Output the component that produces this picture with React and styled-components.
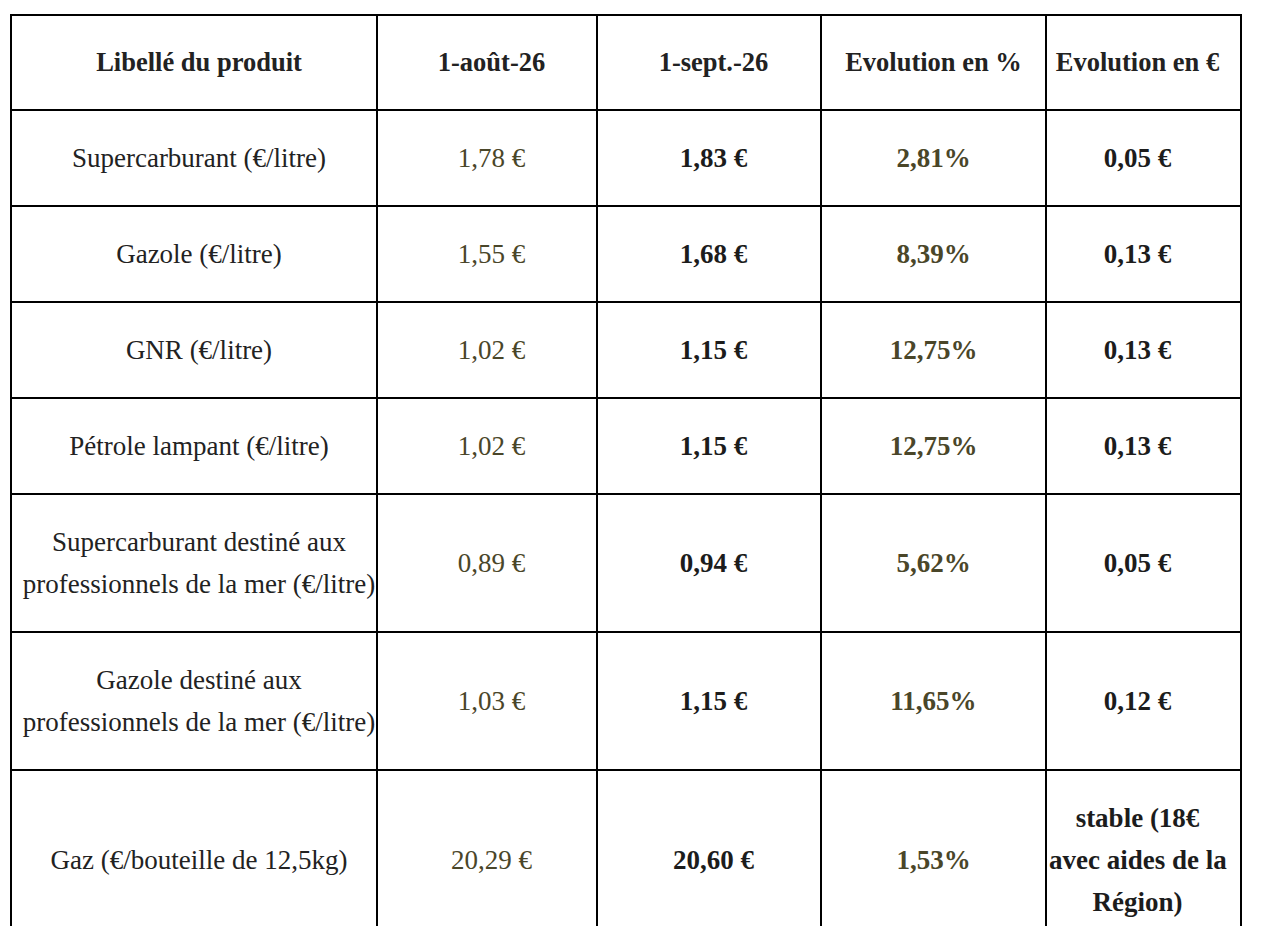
import React from "react";
import styled, { createGlobalStyle } from "styled-components";

const GlobalStyle = createGlobalStyle`
  html, body {
    margin: 0;
    padding: 0;
    background: #ffffff;
  }
  body {
    font-family: "Liberation Serif", "Times New Roman", serif;
    color: #222222;
  }
`;

const Page = styled.div`
  padding: 14px 0 0 10px;
`;

const Table = styled.table`
  border-collapse: collapse;
  table-layout: fixed;
  width: 1231px;
`;

const Col = styled.col`
  width: ${(p) => p.$w}px;
`;

// horizontal padding per column: [left, right]
const pads = [
  [10, 0],
  [10, 1],
  [10, 1],
  [6, 6],
  [2, 14],
];

const Cell = styled.td`
  border: 2px solid #000000;
  padding: 26px ${(p) => pads[p.$col][1]}px 26px ${(p) => pads[p.$col][0]}px;
  text-align: center;
  vertical-align: middle;
  font-size: 27px;
  line-height: 42px;
  white-space: nowrap;
  font-weight: ${(p) => (p.$bold ? 700 : 400)};
  color: ${(p) => (p.$olive ? "#4a4629" : p.$bold ? "#1c1c1c" : "#222222")};
`;

const HeadCell = styled.th`
  border: 2px solid #000000;
  padding: 26px ${(p) => pads[p.$col][1]}px 26px ${(p) => pads[p.$col][0]}px;
  text-align: center;
  vertical-align: middle;
  font-size: 26.5px;
  line-height: 41px;
  font-weight: 700;
  color: #222222;
  white-space: nowrap;
`;

const columns = [366, 220, 224, 225, 195];
const headers = ["Libellé du produit", "1-août-26", "1-sept.-26", "Evolution en %", "Evolution en €"];

const rows = [
  { label: ["Supercarburant (€/litre)"], before: "1,78 €", after: "1,83 €", pct: "2,81%", diff: ["0,05 €"] },
  { label: ["Gazole (€/litre)"], before: "1,55 €", after: "1,68 €", pct: "8,39%", diff: ["0,13 €"] },
  { label: ["GNR (€/litre)"], before: "1,02 €", after: "1,15 €", pct: "12,75%", diff: ["0,13 €"] },
  { label: ["Pétrole lampant (€/litre)"], before: "1,02 €", after: "1,15 €", pct: "12,75%", diff: ["0,13 €"] },
  {
    label: ["Supercarburant destiné aux", "professionnels de la mer (€/litre)"],
    before: "0,89 €",
    after: "0,94 €",
    pct: "5,62%",
    diff: ["0,05 €"],
  },
  {
    label: ["Gazole destiné aux", "professionnels de la mer (€/litre)"],
    before: "1,03 €",
    after: "1,15 €",
    pct: "11,65%",
    diff: ["0,12 €"],
  },
  {
    label: ["Gaz (€/bouteille de 12,5kg)"],
    before: "20,29 €",
    after: "20,60 €",
    pct: "1,53%",
    diff: ["stable (18€", "avec aides de la", "Région)"],
  },
];

function Lines({ items }) {
  return items.map((line, i) => (
    <React.Fragment key={i}>
      {i > 0 && <br />}
      {line}
    </React.Fragment>
  ));
}

export default function App() {
  return (
    <Page>
      <GlobalStyle />
      <Table>
        <colgroup>
          {columns.map((w, i) => (
            <Col key={i} $w={w} />
          ))}
        </colgroup>
        <thead>
          <tr>
            {headers.map((h, i) => (
              <HeadCell key={h} $col={i}>
                {h}
              </HeadCell>
            ))}
          </tr>
        </thead>
        <tbody>
          {rows.map((r, i) => (
            <tr key={i}>
              <Cell $col={0}>
                <Lines items={r.label} />
              </Cell>
              <Cell $col={1} $olive>
                {r.before}
              </Cell>
              <Cell $col={2} $bold>
                {r.after}
              </Cell>
              <Cell $col={3} $bold $olive>
                {r.pct}
              </Cell>
              <Cell $col={4} $bold>
                <Lines items={r.diff} />
              </Cell>
            </tr>
          ))}
        </tbody>
      </Table>
    </Page>
  );
}
